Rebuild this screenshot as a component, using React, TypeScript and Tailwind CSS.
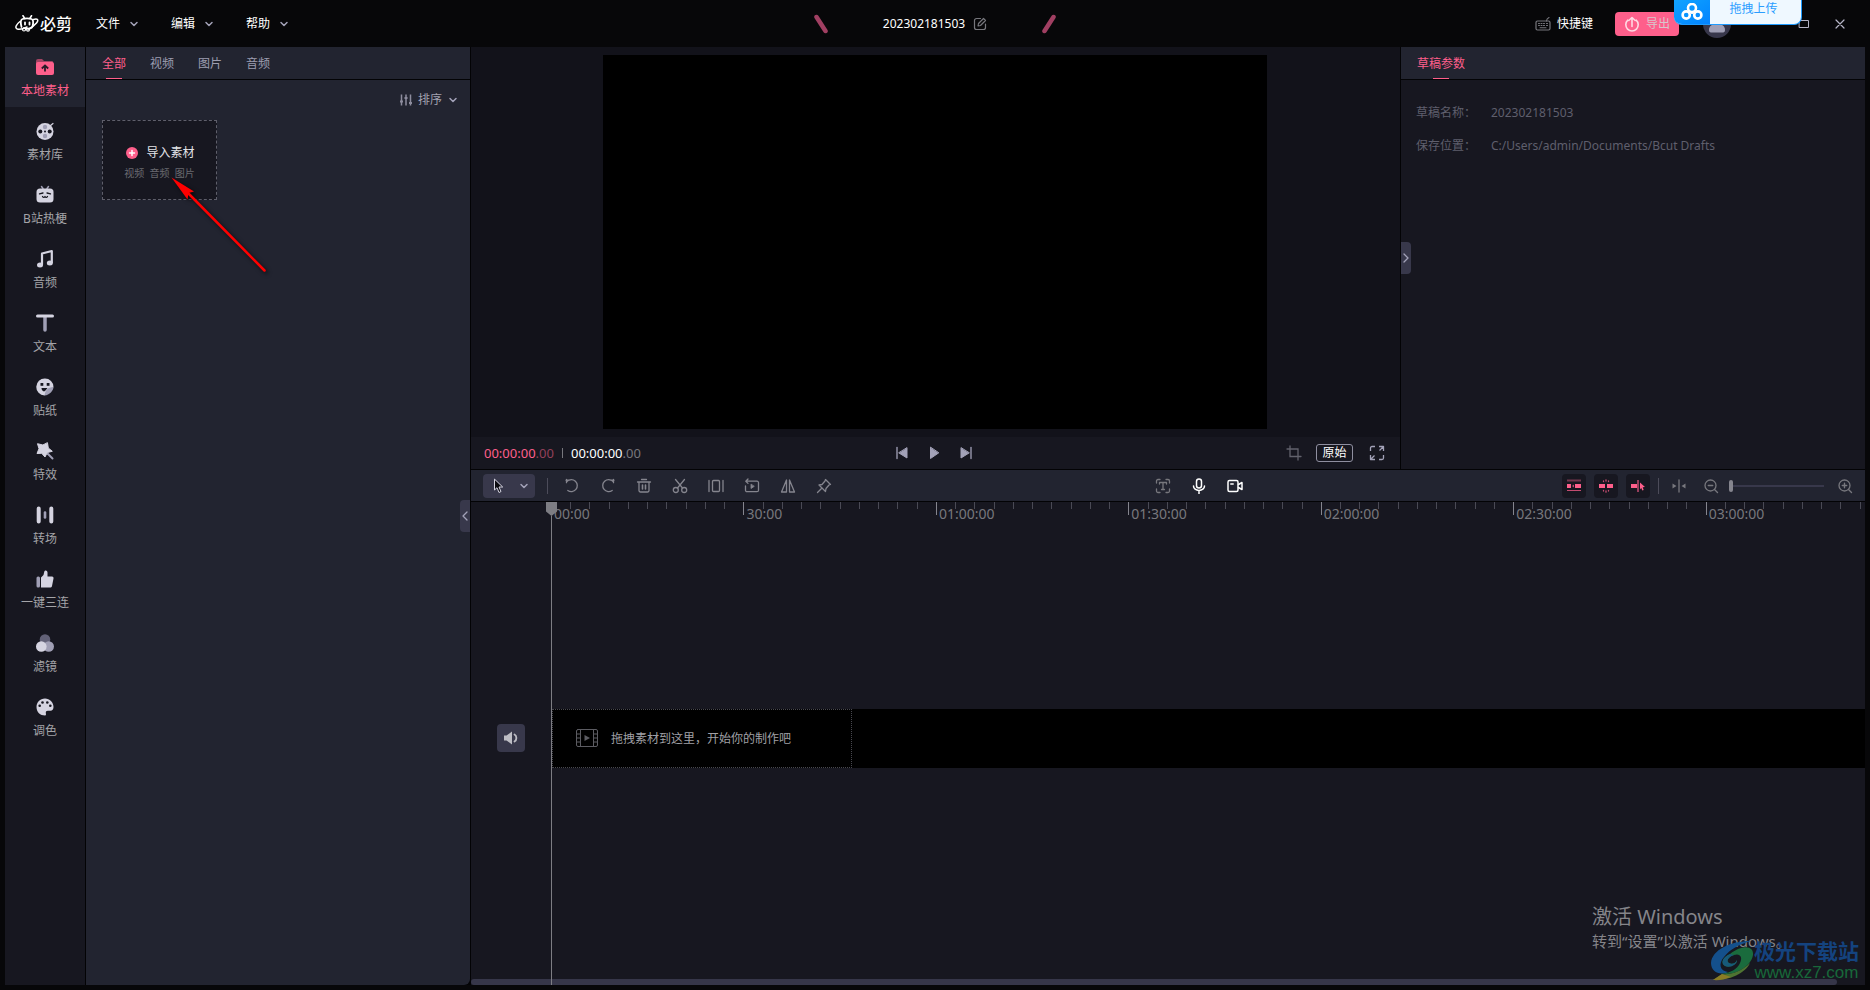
import type { ReactNode } from "react";

type SvgProps = { w?: number; h?: number; box?: string; className?: string; children: ReactNode };

function Svg({ w = 16, h = 16, box, className = "", children }: SvgProps) {
  return (
    <svg
      width={w}
      height={h}
      viewBox={box ?? `0 0 ${w} ${h}`}
      fill="none"
      stroke="currentColor"
      strokeLinecap="round"
      strokeLinejoin="round"
      aria-hidden="true"
      className={`shrink-0 ${className}`}
    >
      {children}
    </svg>
  );
}

const Chevron = ({ className = "text-[#a3a2b8]" }: { className?: string }) => (
  <Svg w={10} h={10} className={className}>
    <path d="M2 3.500 5 6.500 8 3.500" strokeWidth="1.500" />
  </Svg>
);

const LIGHT = "#d5d4e1";
const DIM = "#a09fb5";
const DARK = "#171720";

const sideIcons: Record<string, ReactNode> = {
  local: (
    <>
      <path d="M1 4a2 2 0 0 1 2-2h4l2 2h8a1 1 0 0 1 1 1v3H1z" fill="#a34463" />
      <rect x="1" y="5" width="18" height="13" rx="2" fill="#fe5f8b" />
      <path d="M10 14.500V9M6.800 11.500 10 8.500l3.200 3" stroke="#2a1c28" strokeWidth="1.800" strokeLinecap="butt" strokeLinejoin="miter" />
    </>
  ),
  library: (
    <>
      <circle cx="10" cy="10.500" r="8.500" fill={LIGHT} />
      <path d="M15.500 4.500 18 2.500" stroke={LIGHT} strokeWidth="1.200" />
      <circle cx="10" cy="6" r="2.200" fill={DIM} />
      <circle cx="10" cy="15" r="2.200" fill={DIM} />
      <circle cx="5.300" cy="10.500" r="2" fill={DARK} />
      <circle cx="14.700" cy="10.500" r="2" fill={DARK} />
      <circle cx="10" cy="10.500" r="1" fill={DARK} />
    </>
  ),
  meme: (
    <>
      <path d="M6.500 1.500 8 3.500M13.500 1.500 12 3.500" stroke={DIM} strokeWidth="1.500" />
      <rect x="1.500" y="3.500" width="17" height="14" rx="3.500" fill={LIGHT} />
      <path d="M4.500 8.800 8 8M15.500 8.800 12 8M7.500 11.500c.8 1.200 1.800 1.200 2.500 0 .7 1.200 1.700 1.200 2.500 0" stroke={DARK} strokeWidth="1.300" />
    </>
  ),
  audio: (
    <>
      <path d="M7 15.500V4.500L16.800 2v11.500" stroke={LIGHT} strokeWidth="2.200" />
      <ellipse cx="5" cy="16" rx="3" ry="2.500" fill={LIGHT} />
      <ellipse cx="14.800" cy="14" rx="3" ry="2.500" fill={LIGHT} />
    </>
  ),
  text: (
    <>
      <path d="M10 4v13" stroke={DIM} strokeWidth="3.500" />
      <path d="M2.500 3h15" stroke={LIGHT} strokeWidth="3" />
    </>
  ),
  sticker: (
    <>
      <path d="M10 1.500a8.500 8.500 0 0 0-.5 17L18.500 10A8.500 8.500 0 0 0 10 1.500z" fill={LIGHT} />
      <rect x="5.500" y="6" width="2.800" height="2.800" fill={DARK} />
      <rect x="11.700" y="6" width="2.800" height="2.800" fill={DARK} />
      <path d="M6.500 11h6c-1 1.500-2.500 3-3.500 3.500-1.500-.3-2.500-2-2.500-3.500z" fill={DARK} />
      <path d="M9.500 18.500c.5-5 3.500-8.500 9-8.500 0 3.500-4 8-9 8.500z" fill={DIM} />
    </>
  ),
  effect: (
    <>
      <path d="m12.500 12.500 5 5" stroke={DIM} strokeWidth="2" />
      <path
        d="m12.500 2 .8 5 4 3.300-5 1.200-2.300 4.500-3.300-3.700-4.700.2 2-4.800-1.500-5 5 1.200z"
        fill={LIGHT}
        stroke={LIGHT}
        strokeWidth="1"
      />
    </>
  ),
  transition: (
    <>
      <path d="M3.700 3.500v13M16.300 3.500v13" stroke={LIGHT} strokeWidth="4" />
      <path d="M10 7.500v5" stroke={DIM} strokeWidth="2.600" />
    </>
  ),
  triple: (
    <>
      <rect x="1.500" y="7.500" width="3.500" height="11" rx="1.500" fill={DIM} />
      <path d="M6 8.500 8.500 6l.8-3.500C9.700.8 12.500 1 12.500 3.500V7.500h4.500c1.200 0 1.800 1 1.500 2l-1.500 7.500c-.2 1-1 1.500-2 1.500H6z" fill={LIGHT} />
    </>
  ),
  filter: (
    <>
      <circle cx="10" cy="6.500" r="5.300" fill="#626177" />
      <circle cx="13.700" cy="13.500" r="5.300" fill={DIM} />
      <circle cx="6.300" cy="13.500" r="5.300" fill={LIGHT} />
    </>
  ),
  color: (
    <>
      <path d="M10 1.500C5 1.500 1.500 5.300 1.500 10c0 5 3.700 8.500 8.500 8.500 1.300 0 1-1.500.8-2.500-.2-1.500.7-2.300 2-2.300h2.700c1.800 0 3-1.400 3-3.700 0-4.700-3.800-8.500-8.500-8.500z" fill={LIGHT} />
      <circle cx="4.700" cy="8.800" r="1.300" fill={DARK} />
      <circle cx="7.500" cy="5.500" r="1.300" fill={DARK} />
      <circle cx="12.300" cy="5.500" r="1.300" fill={DARK} />
      <circle cx="15.300" cy="8.800" r="1.300" fill={DARK} />
    </>
  ),
};

const sideItems = [
  ["local", "本地素材"],
  ["library", "素材库"],
  ["meme", "B站热梗"],
  ["audio", "音频"],
  ["text", "文本"],
  ["sticker", "贴纸"],
  ["effect", "特效"],
  ["transition", "转场"],
  ["triple", "一键三连"],
  ["filter", "滤镜"],
  ["color", "调色"],
];

function Header() {
  return (
    <header className="relative grid h-[47px] shrink-0 grid-cols-[1fr_auto_1fr] items-center">
      <div className="flex items-center pl-[15px]">
        <div className="flex items-center gap-px text-white">
          <Svg w={24} h={17}>
            <path d="M8 .8 9.700 3.500M16.500.8 14.800 3.500" strokeWidth="1.600" />
            <path d="M6.500 12c-1-4-.6-7.500 1-8 3-.8 6-.8 9 0 1.700.6 1.900 4 1 7.500-.3 1.200-1 1.600-2 1.800-2.300.4-4.600.4-6.500-.3" strokeWidth="1.800" />
            <path d="M10 7.500v2M14.500 7.500v2" strokeWidth="1.800" />
            <path d="M5 6.500C1 9.500-.4 13 2.300 14c3 .8 6.700-.5 9.700-2M18.500 4.500c4-1.500 5.500.5 3 3.500-2 2.500-5 4.500-8 6" strokeWidth="1.500" />
            <circle cx="9" cy="14.500" r="1.500" strokeWidth="1.200" />
            <circle cx="13" cy="14.800" r="1.400" strokeWidth="1.200" />
          </Svg>
          <span className="text-base leading-5 font-medium">必剪</span>
        </div>
        <nav className="flex gap-[27px] pl-6">
          {["文件", "编辑", "帮助"].map((label) => (
            <button key={label} type="button" className="flex w-12 items-center gap-[9px] text-white">
              <span className="shrink-0">{label}</span>
              <Chevron />
            </button>
          ))}
        </nav>
      </div>

      <div className="flex items-center">
        <Svg w={14} h={20} className="text-[#a03f62]">
          <path d="m2.500 3 9 14" strokeWidth="4.500" />
        </Svg>
        <div className="flex w-[214px] items-center justify-center gap-2 text-white">
          <span>202302181503</span>
          <button type="button" aria-label="重命名" className="text-[#77777d]">
            <Svg w={14} h={14}>
              <path d="M7.500 1.500H3.500a2 2 0 0 0-2 2v7a2 2 0 0 0 2 2h7a2 2 0 0 0 2-2V7" strokeWidth="1.200" />
              <path d="m5 9 .5-2.500 5-5 2 2-5 5zM8.500 7.500 10 6" strokeWidth="1.200" />
            </Svg>
          </button>
        </div>
        <Svg w={14} h={20} className="text-[#a03f62]">
          <path d="m11.500 3-9 14" strokeWidth="4.500" />
        </Svg>
      </div>

      <div className="flex items-center justify-end pr-6">
        <button type="button" className="mr-[22px] flex items-center gap-1.5 text-white">
          <Svg w={16} h={14} className="text-[#77777d]">
            <rect x="1" y="4" width="14" height="9" rx="1.500" strokeWidth="1.200" />
            <path d="M11.500 4c0-2 .5-2.500 2.500-3.500M3.500 6.500h1M6 6.500h1M8.500 6.500h1M11.500 6.500h1M3.500 8.500h1M6 8.500h1M8.500 8.500h1M11.500 8.500h1M5 10.800h6" strokeWidth="1.100" />
          </Svg>
          <span>快捷键</span>
        </button>
        <button type="button" className="flex h-6 w-16 items-center justify-center gap-1.5 rounded bg-[#fe5f8b] text-[#ffd9e3]">
          <Svg w={16} h={16}>
            <path d="M3.800 4.200a6.200 6.200 0 1 0 8.400 0M8 10.500V2M4.800 4.500 8 1.500l3.200 3" strokeWidth="1.600" />
          </Svg>
          <span className="text-[#d9c5cc]">导出</span>
        </button>
        <button type="button" aria-label="账号" className="mr-[67px] ml-6 size-7 overflow-hidden rounded-full bg-[#38374b]">
          <Svg w={28} h={28} className="text-[#a09fb5]">
            <circle cx="14" cy="10" r="5" fill="currentColor" stroke="none" />
            <path d="M6 20c0-4 3-6 8-6s8 2 8 6c0 1.500-.5 2.500-2 2.500H8c-1.500 0-2-1-2-2.500z" fill="currentColor" stroke="none" />
          </Svg>
        </button>
        <div className="flex gap-6 text-[#b5b4c6]">
          <button type="button" aria-label="最大化">
            <Svg w={12} h={12}>
              <rect x="1.500" y="2.500" width="9" height="7" strokeWidth="1" />
            </Svg>
          </button>
          <button type="button" aria-label="关闭">
            <Svg w={12} h={12}>
              <path d="m2 2 8 8M10 2l-8 8" strokeWidth="1.200" />
            </Svg>
          </button>
        </div>
      </div>

      <button
        type="button"
        className="absolute top-0 right-[68px] z-10 flex h-[25px] w-32 overflow-hidden rounded-b-lg border-r border-b border-[#1e9bff] bg-[#eff8ff] text-[#2a9dff]"
      >
        <span className="flex h-full w-9 items-center justify-center bg-linear-to-br from-[#12a3ff] to-[#0583ff] text-white">
          <Svg w={22} h={18}>
            <circle cx="11" cy="5" r="4" strokeWidth="2.600" />
            <circle cx="5.200" cy="12" r="3.600" strokeWidth="2.600" />
            <circle cx="16.800" cy="12" r="3.600" strokeWidth="2.600" />
            <circle cx="11" cy="9.500" r="1.600" fill="currentColor" stroke="none" />
          </Svg>
        </span>
        <span className="flex-1 pr-1 leading-[18px]">拖拽上传</span>
      </button>
    </header>
  );
}

function Sidebar() {
  return (
    <nav className="flex w-20 shrink-0 flex-col gap-1 bg-[#171720]">
      {sideItems.map(([id, label], i) => (
        <button
          key={id}
          type="button"
          className={`flex h-[60px] flex-col items-center gap-1 pt-[10px] ${i === 0 ? "bg-[#222430] text-[#fe5f8b]" : "text-[#a4a4a8]"}`}
        >
          <Svg w={20} h={20}>
            <g stroke="none">{sideIcons[id]}</g>
          </Svg>
          <span className="leading-5">{label}</span>
        </button>
      ))}
    </nav>
  );
}

function MediaPanel() {
  return (
    <section className="relative flex w-96 shrink-0 flex-col gap-px">
      <div className="flex h-8 gap-6 bg-[#222430] px-4 text-[#9d9db0]">
        {["全部", "视频", "图片", "音频"].map((tab, i) => (
          <button key={tab} type="button" className={`relative h-8 pt-0.5 ${i === 0 ? "text-[#fe5f8b]" : ""}`}>
            {tab}
            {i === 0 && <span className="absolute inset-x-1 bottom-0 h-px bg-[#fe5f8b]" />}
          </button>
        ))}
      </div>
      <div className="flex-1 rounded-br-md bg-[#222430] px-4 pt-2">
        <div className="flex justify-end">
          <button type="button" className="-mr-1 flex h-6 items-center gap-1.5 text-[#a3a2b0]">
            <Svg w={12} h={12} className="text-[#8d8c9d]">
              <path d="M1.500.5v11M6 .5v11M10.500.5v11" strokeWidth="1.500" strokeLinecap="butt" />
              <path d="M0 7.500h3M4.500 4h3M9 9h3" strokeWidth="2.200" strokeLinecap="butt" />
            </Svg>
            <span>排序</span>
            <Chevron />
          </button>
        </div>
        <button
          type="button"
          className="mt-2 flex h-20 w-[115px] flex-col items-center justify-center gap-1 border border-dashed border-[#5f5f6b] bg-[#171720] pt-1.5"
        >
          <span className="flex items-center gap-2 pl-0.5 text-[#e4e4e8]">
            <Svg w={12} h={12}>
              <circle cx="6" cy="6" r="6" fill="#fe5f8b" stroke="none" />
              <path d="M6 3.500v5M3.500 6h5" stroke="#ffffff" strokeWidth="1.500" />
            </Svg>
            导入素材
          </span>
          <span className="text-[10px] leading-4 text-[#6a6a70]">视频&nbsp; 音频&nbsp; 图片</span>
        </button>
      </div>
      <Svg w={110} h={110} className="absolute top-[124px] left-[80px] z-10 drop-shadow-[2px_2px_2px_rgba(0,0,0,0.7)]">
        <path d="M20 20 98.500 99.500" stroke="#ff0000" strokeWidth="2.500" />
        <path d="M5.500 6.500 28 20.500l-5.500 1.500-1 6.500z" fill="#ff0000" stroke="none" />
      </Svg>
      <button
        type="button"
        aria-label="收起素材面板"
        className="absolute top-[453px] right-0 flex h-8 w-2.5 items-center justify-center rounded-l bg-[#38384b] text-[#a3a2b8]"
      >
        <Svg w={8} h={12}>
          <path d="M6 2 2 6l4 4" strokeWidth="1.300" />
        </Svg>
      </button>
    </section>
  );
}

function Preview() {
  return (
    <section className="flex min-w-0 flex-1 flex-col">
      <div className="flex justify-center bg-[#12121a] py-2 pr-0.5">
        <div className="aspect-video w-[664px] max-w-full bg-black" />
      </div>
      <div className="grid h-8 grid-cols-[1fr_auto_1fr] items-center bg-[#171720] pr-[15px] pl-3">
        <div className="flex items-center pt-0.5 pl-px text-[13px]">
          <span className="text-[#fe5f8b]">
            00:00:00<span className="text-[#93405a]">.00</span>
          </span>
          <span className="mx-2 h-2.5 w-px bg-[#77777d]" />
          <span className="text-white">
            00:00:00<span className="text-[#77777d]">.00</span>
          </span>
        </div>
        <div className="flex gap-4 text-[#a3a2b8]">
          <button type="button" aria-label="上一帧">
            <Svg>
              <path d="M3 2.500v11" strokeWidth="1.300" />
              <path d="M13 3v10L5 8z" fill="currentColor" strokeWidth="1" />
            </Svg>
          </button>
          <button type="button" aria-label="播放">
            <Svg>
              <path d="M4.500 2.500v11L12.500 8z" fill="currentColor" strokeWidth="1" />
            </Svg>
          </button>
          <button type="button" aria-label="下一帧">
            <Svg>
              <path d="M13 2.500v11" strokeWidth="1.300" />
              <path d="M3 3v10l8-5z" fill="currentColor" strokeWidth="1" />
            </Svg>
          </button>
        </div>
        <div className="flex items-center justify-end gap-4">
          <button type="button" aria-label="裁剪" className="-mr-0.5 text-[#62626c]">
            <Svg>
              <path d="M4 1v10.500h11M1 4h11v11" strokeWidth="1.300" strokeLinejoin="miter" />
            </Svg>
          </button>
          <button type="button" className="h-[18px] w-[37px] rounded-[3px] border border-[#8f8fa0] leading-4 text-white">
            原始
          </button>
          <button type="button" aria-label="全屏" className="text-[#a3a2b8]">
            <Svg>
              <path d="M6 1.500H3a1.500 1.500 0 0 0-1.500 1.500v3M14.500 10v3a1.500 1.500 0 0 1-1.500 1.500h-3M1.500 10v4.500H6M10 1.500h4.500V6M14 2l-3.500 3.500M2 14l3.500-3.500" strokeWidth="1.300" strokeLinecap="butt" />
            </Svg>
          </button>
        </div>
      </div>
    </section>
  );
}

function DraftPanel() {
  return (
    <section className="relative flex w-[464px] shrink-0 flex-col gap-px">
      <div className="flex h-8 bg-[#222430] px-4">
        <button type="button" className="relative h-8 pt-0.5 text-[#fe5f8b]">
          草稿参数
          <span className="absolute inset-x-4 bottom-0 h-px bg-[#fe5f8b]" />
        </button>
      </div>
      <dl className="grid flex-1 grid-cols-[75px_1fr] content-start gap-y-[13px] bg-[#171720] px-[15px] pt-[23px] leading-5 text-[#5f5f6d]">
        <dt>草稿名称：</dt>
        <dd>202302181503</dd>
        <dt>保存位置：</dt>
        <dd>C:/Users/admin/Documents/Bcut Drafts</dd>
      </dl>
      <button
        type="button"
        aria-label="收起参数面板"
        className="absolute top-[195px] left-0 flex h-8 w-2.5 items-center justify-center rounded-r bg-[#38384b] text-[#a3a2b8]"
      >
        <Svg w={8} h={12}>
          <path d="m2 2 4 4-4 4" strokeWidth="1.300" />
        </Svg>
      </button>
    </section>
  );
}

const editTools: [string, ReactNode][] = [
  ["撤销", <path key="u" d="M2 2.200h4M2.500 1.500v3.200M3.200 3.200A6 6 0 1 1 3.800 12.500" />],
  ["重做", <path key="r" d="M14 2.200h-4M13.500 1.500v3.200M12.800 3.200A6 6 0 1 0 12.200 12.500" />],
  [
    "删除",
    <g key="d">
      <path d="M1.500 4h13M5.500 1.500h5M3 4.500v8a1.500 1.500 0 0 0 1.500 1.500h7a1.500 1.500 0 0 0 1.500-1.500v-8" />
      <path d="M6.500 7v4M9.500 7v4" strokeWidth="1.600" />
    </g>,
  ],
  [
    "分割",
    <g key="s">
      <circle cx="3.800" cy="12" r="2.500" />
      <circle cx="12.200" cy="12" r="2.500" />
      <path d="M3.500 1.500 10.500 10M12.500 1.500 5.500 10" />
    </g>,
  ],
  [
    "定格",
    <g key="f">
      <path d="M1 2.500v11M15 2.500v11" />
      <rect x="4.500" y="2.500" width="7" height="11" rx="1" />
    </g>,
  ],
  [
    "倒放",
    <g key="b">
      <path d="M4 1 1.800 3.200 4 5.400M2 3.200h11a1.500 1.500 0 0 1 1.500 1.500v7.500a1.500 1.500 0 0 1-1.500 1.500H3a1.500 1.500 0 0 1-1.500-1.500V8" />
      <path d="M7 6.500v4l3-2z" fill="currentColor" strokeWidth="0.800" />
    </g>,
  ],
  ["镜像", <path key="m" d="M6.500 2v12H1.500zM9.500 2v12h5z" />],
  ["标记", <path key="p" d="m9.500 1.500 5 5-1.500.5-3 3.500-.5 3-6.500-6.500 3-.5L9 3zM5.500 10.500l-4 4" />],
];

function Toolbar() {
  return (
    <div className="grid h-[31px] shrink-0 grid-cols-[1fr_auto_1fr] items-center bg-[#222430] px-3 pt-px">
      <div className="flex items-center">
        <button type="button" aria-label="选择工具" className="flex h-6 w-[52px] items-center justify-between rounded bg-[#38384b] pr-1.5 pl-2">
          <Svg w={14} h={16}>
            <path d="M3.500 1.500v10.500l2.500-2.300 2 4.800 2-1-2-4.500h3.300z" fill="#0b0b10" stroke="#d5d4e1" strokeWidth="1" />
          </Svg>
          <Chevron />
        </button>
        <span className="mr-4 ml-3 h-4 w-px bg-[#4c4c5a]" />
        <div className="flex gap-5 text-[#85858e]">
          {editTools.map(([label, icon]) => (
            <button key={label} type="button" aria-label={label}>
              <Svg>
                <g strokeWidth="1.300">{icon}</g>
              </Svg>
            </button>
          ))}
        </div>
      </div>
      <div className="flex gap-5 pl-[62px] text-white">
        <button type="button" aria-label="识别字幕" className="text-[#77777d]">
          <Svg>
            <path d="M5 1.500H3A1.500 1.500 0 0 0 1.500 3v2M11 1.500h2A1.500 1.500 0 0 1 14.500 3v2M5 14.500H3A1.500 1.500 0 0 1 1.500 13v-2M11 14.500h2a1.500 1.500 0 0 0 1.500-1.500v-2M4.500 6V4.500h7V6M8 4.500v7M6.500 11.500h3" strokeWidth="1.300" />
          </Svg>
        </button>
        <button type="button" aria-label="录音">
          <Svg>
            <rect x="5.500" y="1" width="5" height="9" rx="2.500" strokeWidth="1.500" />
            <path d="M2.500 8a5.500 4.500 0 0 0 11 0M8 12.500v3" strokeWidth="1.500" />
          </Svg>
        </button>
        <button type="button" aria-label="录屏">
          <Svg>
            <rect x="1" y="2.500" width="10" height="11" rx="1.500" strokeWidth="1.500" />
            <path d="M3.800 6h2.400M11.500 6.500 15 4.500v7l-3.500-2" strokeWidth="1.500" />
          </Svg>
        </button>
      </div>
      <div className="flex items-center justify-end">
        <div className="flex gap-2 text-[#fe5f8b]">
          <button type="button" aria-label="主轨磁吸" className="flex size-6 items-center justify-center rounded bg-[#171720]">
            <Svg>
              <path d="M1 2.500h14" stroke="#74364d" strokeWidth="2" strokeLinecap="butt" />
              <path d="M1 12.500h14" stroke="#c34c70" strokeWidth="1" strokeLinecap="butt" />
              <path d="M1 6h4v4H1zM9 6h6v4H9z" fill="currentColor" stroke="none" />
              <path d="M6 8 8 6.500v3z" fill="#c34c70" stroke="none" />
            </Svg>
          </button>
          <button type="button" aria-label="自动吸附" className="flex size-6 items-center justify-center rounded bg-[#171720]">
            <Svg>
              <path d="M1 6h6v4H1zM9 6h6v4H9z" fill="currentColor" stroke="none" />
              <path d="M5.500 3.500v-.5M8 1.800V3M10.500 3.500v-.5M5.500 12.500v.5M8 13v1.200M10.500 12.500v.5" stroke="#c34c70" strokeWidth="1.300" />
            </Svg>
          </button>
          <button type="button" aria-label="预览轴" className="flex size-6 items-center justify-center rounded bg-[#171720]">
            <Svg>
              <path d="M1 6h6v4H1z" fill="currentColor" stroke="none" />
              <path d="M8 2v12" stroke="#c34c70" strokeWidth="1.500" strokeLinecap="butt" />
              <path d="m10 4.500 5 4.500-2.300.3 1 2.700-1.400.5-1-2.500-1.300 1.300z" fill="currentColor" stroke="none" />
            </Svg>
          </button>
        </div>
        <span className="mr-3 ml-2 h-4 w-px bg-[#4c4c5a]" />
        <div className="flex items-center text-[#77777d]">
          <button type="button" aria-label="适应时间线" className="mr-4">
            <Svg>
              <path d="M8 2v12" strokeWidth="1.300" />
              <path d="M1.500 5.500v5l4-2.500zM14.500 5.500v5l-4-2.500z" fill="currentColor" stroke="none" />
            </Svg>
          </button>
          <button type="button" aria-label="缩小">
            <Svg>
              <circle cx="7.500" cy="7.500" r="5.500" strokeWidth="1.300" />
              <path d="m11.500 11.500 3 3M5.300 7.500h4.400" strokeWidth="1.400" />
            </Svg>
          </button>
          <input
            type="range"
            aria-label="时间线缩放"
            min={0}
            max={100}
            defaultValue={0}
            className="mr-[13px] ml-2.5 h-3 w-[95px] appearance-none bg-transparent [&::-webkit-slider-runnable-track]:h-0.5 [&::-webkit-slider-runnable-track]:bg-[#38384b] [&::-webkit-slider-thumb]:-mt-[5px] [&::-webkit-slider-thumb]:h-3 [&::-webkit-slider-thumb]:w-1 [&::-webkit-slider-thumb]:appearance-none [&::-webkit-slider-thumb]:rounded-sm [&::-webkit-slider-thumb]:bg-[#85858e]"
          />
          <button type="button" aria-label="放大">
            <Svg>
              <circle cx="7.500" cy="7.500" r="5.500" strokeWidth="1.300" />
              <path d="m11.500 11.500 3 3M5.300 7.500h4.400M7.500 5.300v4.400" strokeWidth="1.400" />
            </Svg>
          </button>
        </div>
      </div>
    </div>
  );
}

const PX_PER_SECOND = 6.415;
const SEGMENT_SECONDS = 30;
const marks = ["00:00", "30:00", "01:00:00", "01:30:00", "02:00:00", "02:30:00", "03:00:00"];

function Ruler() {
  return (
    <div className="ml-20 flex h-[26px] overflow-hidden">
      {marks.map((mark) => (
        <div key={mark} className="relative shrink-0" style={{ width: PX_PER_SECOND * SEGMENT_SECONDS }}>
          <div className="grid grid-cols-10">
            {Array.from({ length: 10 }, (_, i) => (
              <span key={i} className={i === 0 ? "h-[13px] border-l border-[#85858e]" : "h-[7px] border-l border-[#4a4a55]"} />
            ))}
          </div>
          <span className="absolute top-0.5 left-[3px] text-sm leading-5 text-[#77777d]">{mark}</span>
        </div>
      ))}
    </div>
  );
}

function Timeline() {
  return (
    <section className="relative flex flex-1 flex-col overflow-hidden bg-[#171720]">
      <Ruler />
      <div className="mt-[181px] flex items-center">
        <div className="mr-px flex w-20 shrink-0 justify-center">
          <button type="button" aria-label="静音" className="flex size-7 items-center justify-center rounded bg-[#38384b] text-[#bdbdc4]">
            <Svg>
              <path d="M1 5.500h2.500L9 1.500v13l-5.500-4H1z" fill="currentColor" stroke="none" />
              <path d="M11.500 4.500c2.500 1.500 2.500 5.500 0 7" strokeWidth="1.800" />
            </Svg>
          </button>
        </div>
        <div className="flex flex-1 bg-black">
          <div className="flex h-[59px] w-[300px] items-center gap-[13px] border border-dotted border-[#48484f] pl-[23px] text-[#a0a0a6]">
            <Svg w={22} h={18} className="text-[#5c5c62]">
              <rect x="0.500" y="0.500" width="21" height="17" rx="1.500" strokeWidth="1" />
              <path d="M4.500.5v17M17.500.5v17M.5 5h4M.5 9h4M.5 13h4M17.500 5h4M17.500 9h4M17.500 13h4" strokeWidth="1" />
              <path d="M8.500 6v6l5.500-3z" fill="currentColor" stroke="none" />
            </Svg>
            <span className="pt-0.5">拖拽素材到这里，开始你的制作吧</span>
          </div>
        </div>
      </div>
      <div className="mt-auto mr-7 h-1.5 rounded-full bg-[#363649]" />

      <div className="absolute inset-y-0 left-[75px] flex w-[11px] flex-col items-center text-[#7d7d83]">
        <Svg w={11} h={14}>
          <path d="M0 0h11v9.500L5.500 14 0 9.500z" fill="currentColor" stroke="none" />
        </Svg>
        <span className="w-px flex-1 bg-current" />
      </div>

      <div className="pointer-events-none absolute right-[156px] bottom-[34px] w-[117px] whitespace-nowrap text-[#85858a]">
        <p className="text-xl leading-7">激活 Windows</p>
        <p className="text-[15px] leading-5">转到“设置”以激活 Windows。</p>
      </div>
      <div className="pointer-events-none absolute right-1.5 bottom-0.5 flex items-center">
        <Svg w={44} h={42}>
          <path d="M41 1C20 1 2 10 1 23c0 9 9 13 17 9-8-1-10-8-4-15C20 9 30 4 41 1z" fill="#14508c" stroke="none" />
          <path d="M20 14c-7 3-10 9-5 12 5 2 12-1 12-6-1 3-5 5-8 3-3-2-1-6 5-8 6-2 9 2 6 8-3 7-12 11-19 10 10 4 30-5 32-18 1-9-10-11-23-1z" fill="#1a6b3d" stroke="none" />
          <path d="M20 14c-7 3-10 9-5 12 5 2 12-1 12-6-1 3-5 5-8 3-3-2-1-6 5-8z" fill="#17597a" stroke="none" />
          <path d="M3 40c14 1 32-6 37-17-9 9-20 12-28 11z" fill="#4f7432" stroke="none" />
          <path d="M3 40c6 .5 12-.5 18-3l-9-3z" fill="#8a7c25" stroke="none" />
        </Svg>
        <div className="flex flex-col items-center">
          <span className="text-[21px] leading-6 font-bold text-[#14437f]">极光下载站</span>
          <span className="font-['Liberation_Sans'] text-[17px] leading-5 text-[#17683a]">www.xz7.com</span>
        </div>
      </div>
    </section>
  );
}

export default function App() {
  return (
    <div className="flex min-h-screen flex-col bg-[#070709] font-['Noto_Sans','Noto_Sans_CJK_SC',sans-serif] text-xs select-none">
      <Header />
      <main className="flex flex-1 px-[5px] pb-[5px]">
        <div className="flex min-w-0 flex-1 gap-px bg-[#030305]">
          <Sidebar />
          <MediaPanel />
          <div className="flex min-w-0 flex-1 flex-col gap-px">
            <div className="flex gap-px">
              <Preview />
              <DraftPanel />
            </div>
            <Toolbar />
            <Timeline />
          </div>
        </div>
      </main>
    </div>
  );
}
